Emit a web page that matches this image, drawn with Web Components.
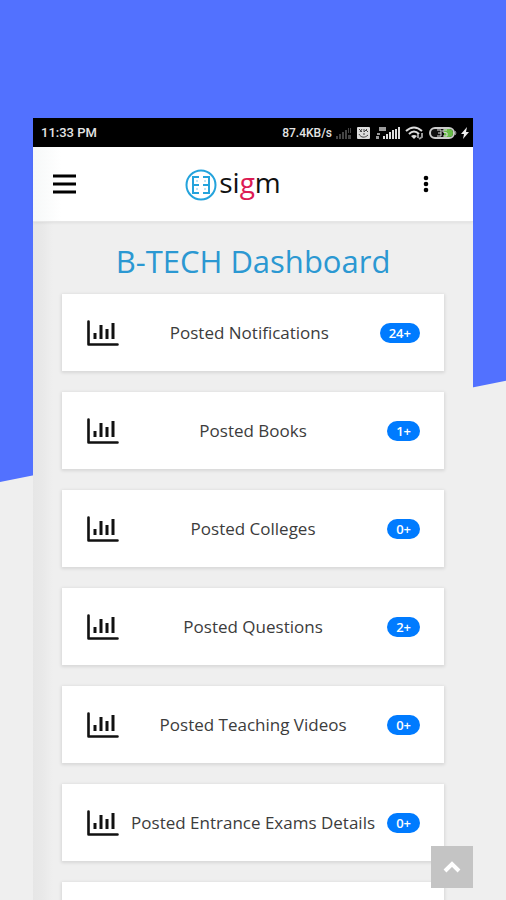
<!DOCTYPE html>
<html lang="en">
<head>
<meta charset="utf-8">
<meta name="viewport" content="width=device-width, initial-scale=1">
<title>B-TECH Dashboard</title>
<style>
  body { margin: 0; background: #efefef; font-family: "Open Sans", "Noto Sans", sans-serif; }
</style>
</head>
<body>
<promo-stage>
  <status-bar time="11:33 PM" rate="87.4KB/s"></status-bar>
  <app-header></app-header>
  <dash-board heading="B-TECH Dashboard">
    <stat-card count="24+">Posted Notifications</stat-card>
    <stat-card count="1+">Posted Books</stat-card>
    <stat-card count="0+">Posted Colleges</stat-card>
    <stat-card count="2+">Posted Questions</stat-card>
    <stat-card count="0+">Posted Teaching Videos</stat-card>
    <stat-card count="0+">Posted Entrance Exams Details</stat-card>
    <stat-card></stat-card>
  </dash-board>
  <scroll-top slot="overlay"></scroll-top>
</promo-stage>
<script>
const define = (name, render) => customElements.define(name, class extends HTMLElement {
  constructor() {
    super();
    this.attachShadow({ mode: 'open' });
  }
  connectedCallback() {
    this.shadowRoot.innerHTML = render(this);
  }
});

define('promo-stage', () => `
<style>
  :host { display: block; position: relative; height: 100vh; overflow: hidden; box-sizing: border-box; padding: 118px 33px 0; background: #efefef; }
  .backdrop { position: absolute; inset: 0 0 auto; height: 482px; background: #5271ff; clip-path: polygon(0 0, 100% 0, 100% 79%, 0 100%); }
  main { position: relative; background: #efefef; }
</style>
<div class="backdrop"></div>
<main><slot></slot></main>
<slot name="overlay"></slot>`);

define('status-bar', el => `
<style>
  :host { display: flex; align-items: center; height: 29px; padding: 0 4px 0 8px; background: #000; color: #e4e4e4; font: 500 13px/16px Roboto, sans-serif; }
  .right { margin-left: auto; display: flex; align-items: center; gap: 4px; font-size: 12px; }
  svg { display: block; }
</style>
<span>${el.getAttribute('time')}</span>
<div class="right">
  <span>${el.getAttribute('rate')}</span>
  <svg width="16" height="14" viewBox="0 0 16 14" fill="#444"><path d="M0 10h2v3H0zM3 8h2v5H3zM6 6h2v7H6zM9 4h2v9H9zM12 2h1v5h-1zM14 2h1v5h-1zM12 9h3v4h-3z"/></svg>
  <svg width="15" height="14" viewBox="0 0 15 14"><rect x="1" y="1" width="13" height="12" rx="1" fill="#ddd"/><path d="M3 3l3 3M6 3L4 6M8 3v3l3-3M10 4l2 2M3 8c2 4 6 4 9 1M7 8h2" stroke="#444" fill="none"/></svg>
  <svg width="26" height="14" viewBox="0 0 26 14" fill="#ddd"><path d="M4 1h7v4H4zM2 7h3v2H2zM1 10h3v3H1z" opacity=".7"/><path d="M8 10h2v3H8zM11 8h2v5h-2zM14 6h2v7h-2zM17 4h2v9h-2zM20 3h2v10h-2zM23 1h2v12h-2z"/></svg>
  <svg width="20" height="14" viewBox="0 0 20 14" fill="none" stroke="#ddd" stroke-width="2"><path d="M1 5Q9-2 17 5M4 8q5-5 10 0"/><path d="M6 10q3-2 6 0l-3 3z" fill="#ddd" stroke="none"/><path d="M13 12V8M17 7v4l-3 2" stroke="#999"/></svg>
  <svg width="28" height="14" viewBox="0 0 28 14"><rect x="1" y="2" width="24" height="10" rx="5" fill="#111" stroke="#ccc" stroke-width="2"/><path d="M15 3h5a4 4 0 0 1 0 8h-5z" fill="#68bc48"/><path d="M8 4h4v6H8m1-3h3M18 4h-4v2l4 1v3h-4" fill="none" stroke="#ddd" stroke-width="1"/><path d="M26 5q2 2 0 4" stroke="#aaa" fill="none"/></svg>
  <svg width="8" height="14" viewBox="0 0 8 14"><path d="M6 1L0 8h3l-1 5 6-7H5z" fill="#eee"/></svg>
</div>`);

define('app-header', () => `
<style>
  :host { display: flex; align-items: center; justify-content: space-between; height: 75px; box-sizing: border-box; padding: 0 40px 0 18px; background: linear-gradient(90deg, #f6f8f8, #fff 28px); border-bottom: 1px solid #e6e6e6; box-shadow: 0 1px 3px #00000010; position: relative; }
  button { display: block; border: 0; padding: 0; background: none; }
  svg { display: block; }
  .logo { display: flex; align-items: center; gap: 2px; margin-right: 30px; padding-bottom: 4px; color: #111; text-decoration: none; font: 28px/32px "Open Sans", sans-serif; }
  .logo svg { margin-top: 6px; }
  b { font-weight: 400; color: #dc1b54; }
</style>
<button aria-label="Menu"><svg width="26" height="22" viewBox="0 0 26 22"><path d="M2 3h23M2 11h23M2 19h23" stroke="#000" stroke-width="3"/></svg></button>
<a class="logo" href="#"><svg width="32" height="32" viewBox="0 0 32 32" fill="none" stroke="#24a3dc" stroke-width="2"><circle cx="16" cy="16" r="14.5"/><path d="M14 8H8V24H14M8 16H14M18 8H24V24H18M24 16H18"/><path d="M12 11v2M12 19v2M20 11v2M20 19v2" stroke-width="1" opacity=".6"/></svg><span>si<b>g</b>m</span></a>
<button aria-label="More options"><svg width="14" height="20" viewBox="0 0 14 20"><circle cx="7" cy="4" r="2.3"/><circle cx="7" cy="10" r="2.3"/><circle cx="7" cy="16" r="2.3"/></svg></button>`);

define('dash-board', el => `
<style>
  :host { display: block; padding: 17px 29px 40px; background: linear-gradient(90deg, #e6e6e6, #e9e9e9 10px, #efefef 20px); }
  h1 { margin: 0 0 11px; font-size: 31px; line-height: 44px; font-weight: 400; text-align: center; color: #2b98d2; }
  .list { display: grid; gap: 21px; }
</style>
<h1>${el.getAttribute('heading')}</h1>
<div class="list"><slot></slot></div>`);

define('stat-card', el => `
<style>
  :host { display: flex; align-items: center; min-height: 77px; box-sizing: border-box; padding: 0 24px 0 25px; background: #fff; box-shadow: 0 1px 3px 1px #00000018; color: #3c3c3c; font-size: 17px; line-height: 24px; }
  svg { flex: none; display: block; }
  .label { flex: 1; text-align: center; white-space: nowrap; }
  .badge { padding: 0 9px; border-radius: 10px; background: #007bff; color: #fff; font-size: 13px; line-height: 20px; font-weight: 600; }
</style>
<svg width="32" height="26" viewBox="0 0 32 26" fill="none" stroke="#111"><path d="M1.5 1.500V24.500H30.500" stroke-width="2.600" stroke-linejoin="round" stroke-linecap="round"/><path d="M8 13v6M14 5v14M20 9v10M26 3v16" stroke-width="3"/></svg>
<span class="label"><slot></slot></span>
${el.hasAttribute('count') ? `<span class="badge">${el.getAttribute('count')}</span>` : ''}`);

define('scroll-top', () => `
<style>
  :host { position: absolute; right: 33px; bottom: 12px; }
  button { display: grid; place-items: center; width: 42px; height: 42px; padding: 0; border: 0; background: #c4c4c4; }
</style>
<button aria-label="Back to top"><svg width="18" height="12" viewBox="0 0 18 12"><path d="M2 10L9 3l7 7" fill="none" stroke="#fff" stroke-width="4"/></svg></button>`);
</script>
</body>
</html>
